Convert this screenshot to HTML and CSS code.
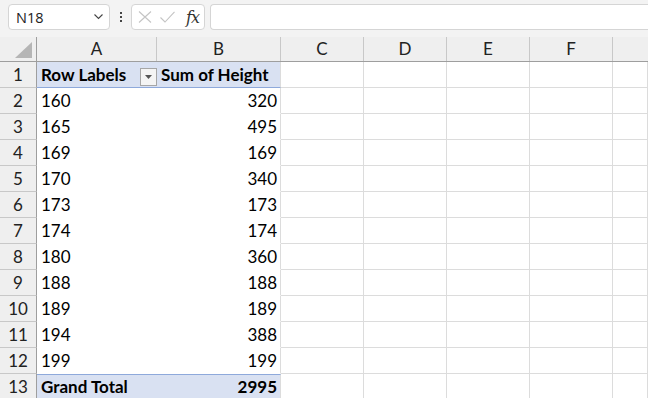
FILE: index.html
```html
<!DOCTYPE html>
<html lang="en">
<head>
    <meta charset="UTF-8">
    <meta name="viewport" content="width=device-width, initial-scale=1.0">
    <title>Pivot Table - Sum of Height</title>
    <link rel="stylesheet" href="styles.css">
</head>
<body>
    <div class="formula-bar">
        <div class="name-box">
            <span>N18</span>
            <svg width="9" height="6" viewBox="0 0 9 6"><path d="M0.5 0.5 L4.5 4.5 L8.5 0.5" fill="none" stroke="#444" stroke-width="1.1"/></svg>
        </div>
        <div class="grip">
            <i></i><i></i><i></i>
        </div>
        <div class="fx-box">
            <svg width="14" height="12" viewBox="0 0 14 12"><path d="M1 0.5 L13 11.5 M13 0.5 L1 11.5" stroke="#c4c4c4" stroke-width="1.1" fill="none"/></svg>
            <svg width="15" height="12" viewBox="0 0 15 12"><path d="M0.5 6.5 L5 11 L14.5 0.8" stroke="#c4c4c4" stroke-width="1.1" fill="none"/></svg>
            <span class="fx">fx</span>
        </div>
        <div class="formula-input"></div>
    </div>

    <div class="sheet">
        <div class="row head">
            <div class="corner"><svg width="17" height="16" viewBox="0 0 17 16"><path d="M17 0 L17 16 L0 16 Z" fill="#b5b5b5"/></svg></div>
            <div class="col">A</div>
            <div class="col">B</div>
            <div class="col">C</div>
            <div class="col">D</div>
            <div class="col">E</div>
            <div class="col">F</div>
            <div class="col last"></div>
        </div>

        <div class="row">
            <div class="rh">1</div>
            <div class="c pv-head label">
                <span>Row Labels</span>
                <span class="filter-btn"><svg width="7" height="4" viewBox="0 0 7 4"><path d="M0 0 L7 0 L3.5 4 Z" fill="#555"/></svg></span>
            </div>
            <div class="c pv-head">Sum of Height</div>
            <div class="c"></div><div class="c"></div><div class="c"></div><div class="c"></div><div class="c"></div>
        </div>
        <div class="row">
            <div class="rh">2</div>
            <div class="c pv">160</div><div class="c pv num">320</div>
            <div class="c"></div><div class="c"></div><div class="c"></div><div class="c"></div><div class="c"></div>
        </div>
        <div class="row">
            <div class="rh">3</div>
            <div class="c pv">165</div><div class="c pv num">495</div>
            <div class="c"></div><div class="c"></div><div class="c"></div><div class="c"></div><div class="c"></div>
        </div>
        <div class="row">
            <div class="rh">4</div>
            <div class="c pv">169</div><div class="c pv num">169</div>
            <div class="c"></div><div class="c"></div><div class="c"></div><div class="c"></div><div class="c"></div>
        </div>
        <div class="row">
            <div class="rh">5</div>
            <div class="c pv">170</div><div class="c pv num">340</div>
            <div class="c"></div><div class="c"></div><div class="c"></div><div class="c"></div><div class="c"></div>
        </div>
        <div class="row">
            <div class="rh">6</div>
            <div class="c pv">173</div><div class="c pv num">173</div>
            <div class="c"></div><div class="c"></div><div class="c"></div><div class="c"></div><div class="c"></div>
        </div>
        <div class="row">
            <div class="rh">7</div>
            <div class="c pv">174</div><div class="c pv num">174</div>
            <div class="c"></div><div class="c"></div><div class="c"></div><div class="c"></div><div class="c"></div>
        </div>
        <div class="row">
            <div class="rh">8</div>
            <div class="c pv">180</div><div class="c pv num">360</div>
            <div class="c"></div><div class="c"></div><div class="c"></div><div class="c"></div><div class="c"></div>
        </div>
        <div class="row">
            <div class="rh">9</div>
            <div class="c pv">188</div><div class="c pv num">188</div>
            <div class="c"></div><div class="c"></div><div class="c"></div><div class="c"></div><div class="c"></div>
        </div>
        <div class="row">
            <div class="rh">10</div>
            <div class="c pv">189</div><div class="c pv num">189</div>
            <div class="c"></div><div class="c"></div><div class="c"></div><div class="c"></div><div class="c"></div>
        </div>
        <div class="row">
            <div class="rh">11</div>
            <div class="c pv">194</div><div class="c pv num">388</div>
            <div class="c"></div><div class="c"></div><div class="c"></div><div class="c"></div><div class="c"></div>
        </div>
        <div class="row">
            <div class="rh">12</div>
            <div class="c pv">199</div><div class="c pv num">199</div>
            <div class="c"></div><div class="c"></div><div class="c"></div><div class="c"></div><div class="c"></div>
        </div>
        <div class="row">
            <div class="rh">13</div>
            <div class="c pv-total">Grand Total</div><div class="c pv-total num">2995</div>
            <div class="c"></div><div class="c"></div><div class="c"></div><div class="c"></div><div class="c"></div>
        </div>
    </div>
</body>
</html>
```

FILE: styles.css
```css
/* excel sheet */
* {
    box-sizing: border-box;
}

body {
    margin: 0;
    padding: 0;
    width: 648px;
    height: 398px;
    overflow: hidden;
    background-color: #fff;
    font-family: Lato, "Liberation Sans", sans-serif;
    color: #000;
}

/* formula bar */
.formula-bar {
    height: 37px;
    background-color: #f3f3f3;
    display: flex;
    align-items: flex-start;
    padding: 4px 0 0 8px;
}

.name-box,
.fx-box,
.formula-input {
    height: 26px;
    background-color: #fff;
    border: 1px solid #d5d5d5;
    border-radius: 4px;
}

.name-box {
    width: 102px;
    display: flex;
    align-items: center;
    justify-content: space-between;
    padding: 0 6px 0 7px;
    font-family: "Open Sans", "Noto Sans", sans-serif;
    font-size: 14.5px;
    color: #222;
}

.grip {
    width: 21px;
    height: 26px;
    display: flex;
    flex-direction: column;
    align-items: center;
    justify-content: center;
    gap: 2px;
}

.grip i {
    display: block;
    width: 2px;
    height: 2px;
    background-color: #444;
}

.fx-box {
    width: 74px;
    display: flex;
    align-items: center;
    padding: 0 5px 0 6px;
    gap: 8px;
}

.fx-box .fx {
    margin-left: 3px;
    font-family: "DejaVu Serif", "Liberation Serif", serif;
    font-style: italic;
    font-size: 16px;
    color: #333;
    letter-spacing: -1px;
}

.formula-input {
    flex: 1;
    margin-left: 5px;
    border-right: none;
    border-radius: 4px 0 0 4px;
}

/* grid */
.sheet {
    font-size: 17px;
}

.row {
    display: grid;
    grid-template-columns: 37px 120px 124px 83px 83px 83px 83px 1fr;
    height: 26px;
}

.row.head {
    height: 25px;
    background-color: #efefef;
    border-bottom: 1px solid #9e9e9e;
}

.corner {
    display: flex;
    align-items: flex-end;
    justify-content: flex-end;
    padding: 0 4px 3px 0;
    border-right: 1px solid #9e9e9e;
}

.col {
    display: flex;
    align-items: center;
    justify-content: center;
    border-right: 1px solid #c8c8c8;
    color: #222;
    line-height: 24px;
}

.col.last {
    border-right: none;
}

.rh {
    background-color: #efefef;
    border-right: 1px solid #9e9e9e;
    border-bottom: 1px solid #c8c8c8;
    text-align: center;
    line-height: 25px;
    color: #222;
}

.c {
    border-right: 1px solid #dcdcdc;
    border-bottom: 1px solid #dcdcdc;
    line-height: 25px;
    padding: 0 3px 0 4px;
    white-space: nowrap;
    overflow: hidden;
}

.c.num {
    text-align: right;
}

.c.pv {
    border-bottom-color: #fff;
}

.row .rh + .c {
    border-right: none;
}

.pv-head {
    background-color: #d9e1f2;
    border-bottom: 1px solid #8ea9db;
    font-weight: bold;
}

.pv-head.label {
    display: flex;
    align-items: center;
    justify-content: space-between;
    padding-right: 0;
}

.filter-btn {
    width: 17px;
    height: 18px;
    margin-top: 4px;
    border: 1px solid #a6a6a6;
    background-color: #f4f4f4;
    display: flex;
    align-items: center;
    justify-content: center;
}

.pv-total {
    background-color: #d9e1f2;
    border-top: 1px solid #8ea9db;
    font-weight: bold;
    line-height: 24px;
}
```
